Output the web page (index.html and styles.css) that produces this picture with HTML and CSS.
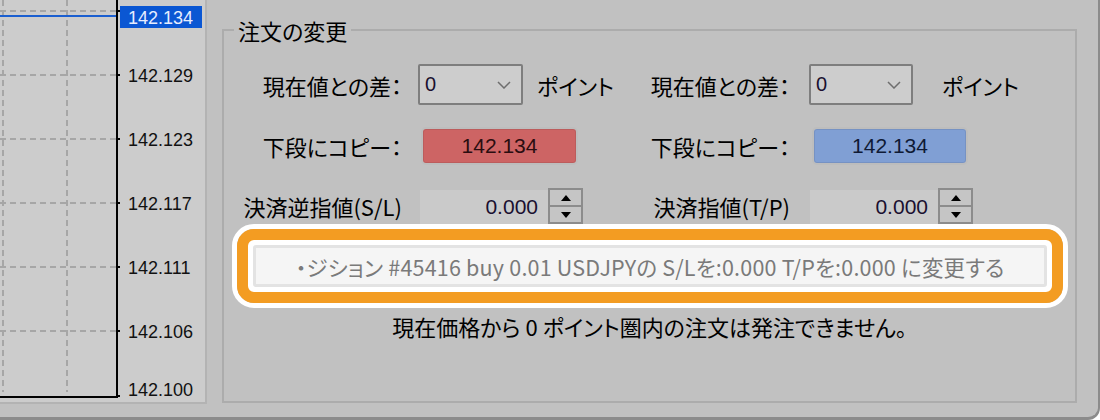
FILE: index.html
```html
<!DOCTYPE html>
<html lang="ja">
<head>
  <meta charset="UTF-8">
  <meta name="viewport" content="width=device-width, initial-scale=1.0">
  <title>注文の変更</title>
  <link rel="stylesheet" href="styles.css">
</head>
<body>
  <div class="window">
    <div class="chart">
      <svg class="chart-svg" width="205" height="402" viewBox="0 0 205 402">
        <g stroke="#a6a6a6" stroke-width="2" stroke-dasharray="6 4" fill="none">
          <line x1="3" y1="0" x2="3" y2="392"/>
          <line x1="67" y1="0" x2="67" y2="392"/>
          <line x1="0" y1="11" x2="116" y2="11"/>
          <line x1="0" y1="75" x2="116" y2="75"/>
          <line x1="0" y1="139" x2="116" y2="139"/>
          <line x1="0" y1="203" x2="116" y2="203"/>
          <line x1="0" y1="267" x2="116" y2="267"/>
          <line x1="0" y1="331" x2="116" y2="331"/>
        </g>
        <line x1="0" y1="16" x2="117" y2="16" stroke="#1b5fd0" stroke-width="2"/>
        <path d="M117 0 V397 H0" stroke="#000" stroke-width="2" fill="none"/>
        <g stroke="#000" stroke-width="2">
          <line x1="117" y1="11" x2="120" y2="11"/>
          <line x1="117" y1="75" x2="120" y2="75"/>
          <line x1="117" y1="139" x2="120" y2="139"/>
          <line x1="117" y1="203" x2="120" y2="203"/>
          <line x1="117" y1="267" x2="120" y2="267"/>
          <line x1="117" y1="331" x2="120" y2="331"/>
          <line x1="117" y1="396" x2="120" y2="396"/>
        </g>
        <g class="axis-text">
          <text x="128" y="81.5">142.129</text>
          <text x="128" y="145.5">142.123</text>
          <text x="128" y="209.5">142.117</text>
          <text x="128" y="273.5">142.111</text>
          <text x="128" y="337.5">142.106</text>
          <text x="128" y="395.5">142.100</text>
        </g>
        <rect x="120" y="6" width="82" height="22" fill="#0b57d3"/>
        <text class="axis-text axis-current" x="128" y="24">142.134</text>
      </svg>
    </div>

    <fieldset class="order-box">
      <legend>注文の変更</legend>

      <div class="row row-diff">
        <span class="lbl">現在値との差：</span>
        <div class="ctrl">
          <div class="select select-left">
            <span>0</span>
            <svg class="chevron" width="14" height="8" viewBox="0 0 14 8"><polyline points="1,1 7,7 13,1" fill="none" stroke="#6e6e6e" stroke-width="1.5"/></svg>
          </div>
          <span class="unit unit-left">ポイント</span>
        </div>
        <span class="lbl">現在値との差：</span>
        <div class="ctrl">
          <div class="select select-right">
            <span>0</span>
            <svg class="chevron" width="14" height="8" viewBox="0 0 14 8"><polyline points="1,1 7,7 13,1" fill="none" stroke="#6e6e6e" stroke-width="1.5"/></svg>
          </div>
          <span class="unit unit-right">ポイント</span>
        </div>
      </div>

      <div class="row row-copy">
        <span class="lbl">下段にコピー：</span>
        <div class="ctrl">
          <button class="copy copy-sell">142.134</button>
        </div>
        <span class="lbl">下段にコピー：</span>
        <div class="ctrl">
          <button class="copy copy-buy">142.134</button>
        </div>
      </div>

      <div class="row row-stops">
        <span class="lbl">決済逆指値(S/L)</span>
        <div class="ctrl">
          <div class="spin spin-left">
            <span class="spin-value">0.000</span>
            <div class="spin-buttons">
              <span class="spin-btn"><svg width="10" height="6" viewBox="0 0 10 6"><polygon points="5,0 10,6 0,6" fill="#000"/></svg></span>
              <span class="spin-btn"><svg width="10" height="6" viewBox="0 0 10 6"><polygon points="0,0 10,0 5,6" fill="#000"/></svg></span>
            </div>
          </div>
        </div>
        <span class="lbl">決済指値(T/P)</span>
        <div class="ctrl">
          <div class="spin spin-right">
            <span class="spin-value">0.000</span>
            <div class="spin-buttons">
              <span class="spin-btn"><svg width="10" height="6" viewBox="0 0 10 6"><polygon points="5,0 10,6 0,6" fill="#000"/></svg></span>
              <span class="spin-btn"><svg width="10" height="6" viewBox="0 0 10 6"><polygon points="0,0 10,0 5,6" fill="#000"/></svg></span>
            </div>
          </div>
        </div>
      </div>

      <div class="callout">
        <div class="callout-ring">
          <button class="modify">・ジション #45416 buy 0.01 USDJPYの S/Lを:0.000 T/Pを:0.000 に変更する</button>
        </div>
      </div>

      <p class="notice">現在価格から 0 ポイント圏内の注文は発注できません。</p>
    </fieldset>
  </div>
</body>
</html>
```

FILE: styles.css
```css
body {
  margin: 0;
  background-color: #ffffff;
  font-family: "Noto Sans CJK JP", "Liberation Sans", sans-serif;
}

.window {
  display: flex;
  align-items: flex-start;
  width: 1100px;
  height: 420px;
  box-sizing: border-box;
  background-color: #c1c1c1;
  border-right: 2px solid #8c8c8c;
  border-bottom: 3px solid #8c8c8c;
  border-bottom-right-radius: 12px;
}

/* chart */
.chart {
  flex: none;
  width: 207px;
  height: 404px;
  box-sizing: border-box;
  background-color: #cccccc;
  border-right: 2px solid #b3b3b3;
  border-bottom: 2px solid #b3b3b3;
}

.chart-svg {
  display: block;
}

.axis-text {
  font-family: "Liberation Sans", Arial, sans-serif;
  font-size: 18px;
  fill: #111111;
}

.axis-current {
  fill: #e6edff;
}

/* order panel */
.order-box {
  flex: none;
  width: 855px;
  height: 385px;
  box-sizing: border-box;
  margin: 18px 0 0 15px;
  padding: 22px 0 0 0;
  border: 2px solid #acacac;
  font-size: 22px;
  font-feature-settings: "palt";
  color: #000000;
}

.order-box legend {
  margin-left: 10px;
  padding: 0 4px;
  font-size: 22px;
  line-height: 24px;
}

.row {
  display: grid;
  grid-template-columns: 180px 188px 200px 1fr;
  grid-template-rows: 100%;
  align-items: center;
}

.row-diff {
  height: 41px;
}

.row-copy {
  height: 38px;
  margin-top: 22px;
}

.row-stops {
  height: 36px;
  margin-top: 23px;
}

.lbl {
  text-align: right;
  padding-right: 2px;
  white-space: nowrap;
}

.ctrl {
  display: flex;
  align-items: center;
  height: 100%;
}

.select {
  flex: none;
  display: flex;
  align-items: center;
  justify-content: space-between;
  height: 41px;
  box-sizing: border-box;
  padding: 0 10px 0 5px;
  background-color: #cdcdcd;
  border: 2px solid #7e7e7e;
  border-radius: 2px;
  font-family: "Liberation Sans", sans-serif;
  font-size: 20px;
  color: #1a1030;
}

.select-left {
  width: 105px;
  margin-left: 14px;
}

.select-right {
  width: 104px;
  margin-left: 17px;
}

.unit {
  flex: none;
  white-space: nowrap;
}

.unit-left {
  margin-left: 14px;
}

.unit-right {
  margin-left: 29px;
}

.copy {
  flex: none;
  height: 38px;
  box-sizing: border-box;
  border: 2px solid #bdbdbd;
  border-radius: 5px;
  box-shadow: inset 0 0 0 1px rgba(0, 0, 0, 0.08);
  font-family: "Liberation Sans", sans-serif;
  font-size: 21px;
  padding: 0;
}

.copy-sell {
  width: 157px;
  margin-left: 17px;
  background-color: #cd6464;
  color: #2a0d10;
}

.copy-buy {
  width: 156px;
  margin-left: 20px;
  background-color: #809fd4;
  color: #0f1a35;
}

.spin {
  flex: none;
  display: flex;
  height: 36px;
}

.spin-left {
  margin-left: 16px;
}

.spin-right {
  margin-left: 18px;
}

.spin-value {
  width: 128px;
  box-sizing: border-box;
  padding-right: 10px;
  text-align: right;
  line-height: 34px;
  margin-top: 2px;
  background-color: #cacaca;
  font-family: "Liberation Sans", sans-serif;
  font-size: 21px;
  color: #1a1030;
}

.spin-buttons {
  display: flex;
  flex-direction: column;
  width: 35px;
  box-sizing: border-box;
  border: 2px solid #8c8c8c;
  background-color: #c5c5c5;
}

.spin-btn {
  flex: 1;
  display: flex;
  align-items: center;
  justify-content: center;
}

.spin-btn + .spin-btn {
  border-top: 2px solid #8c8c8c;
}

/* highlighted button */
.callout {
  margin: 0 7px 0 8px;
  border: 5px solid #ffffff;
  border-radius: 22px;
}

.callout-ring {
  padding: 5px;
  background-color: #ffffff;
  border: 11px solid #f39c22;
  border-radius: 17px;
}

.modify {
  display: block;
  width: 100%;
  height: 42px;
  border: 3px solid #e3e3e3;
  border-radius: 3px;
  background-color: #f5f5f5;
  font-family: "Noto Sans CJK JP", "Liberation Sans", sans-serif;
  font-feature-settings: "palt";
  font-size: 21.5px;
  letter-spacing: 0.2px;
  color: #7a7a7a;
  padding: 0;
}

.notice {
  margin: 0;
  height: 36px;
  line-height: 36px;
  text-align: center;
}
```
